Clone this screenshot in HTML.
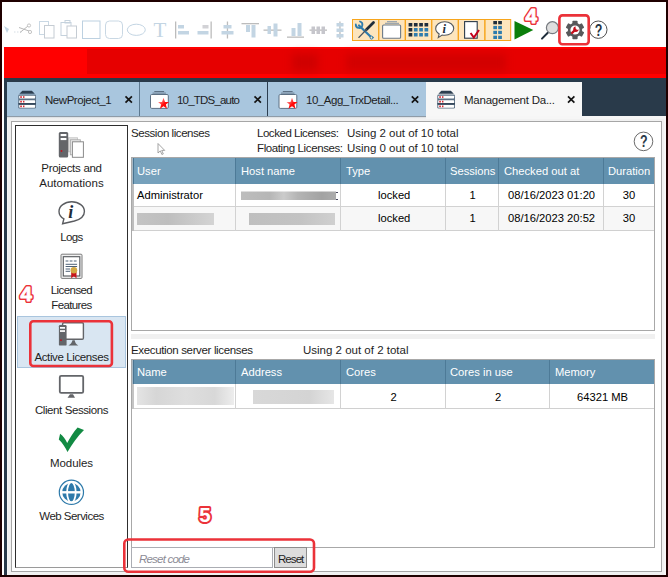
<!DOCTYPE html>
<html lang="en">
<head>
<meta charset="utf-8">
<title>Management Dashboard - Active Licenses</title>
<style>
html,body{margin:0;padding:0;background:#fff;}
body{width:668px;height:577px;position:relative;overflow:hidden;font-family:"Liberation Sans",sans-serif;font-size:12px;color:#1a1a1a;}
.a{position:absolute;box-sizing:border-box;}
.t{position:absolute;white-space:nowrap;line-height:16px;height:16px;font-size:11.5px;color:#1e1e1e;}
.g{font-size:11.2px;color:#000;}
.h{font-size:11.2px;color:#fff;}
.c{text-align:center;}
svg{position:absolute;overflow:visible;}
</style>
</head>
<body>
<!-- window frame -->
<div class="a" style="left:0;top:0;width:668px;height:577px;border:2px solid #1f0000;"></div>

<!-- red banner -->
<div class="a" style="left:4px;top:47px;width:662px;height:31px;background:#ff0000;"></div>
<div class="a" style="left:87px;top:49px;width:579px;height:25px;background:#e60000;"></div>

<!-- navy strip + tabs -->
<div class="a" style="left:4px;top:78px;width:662px;height:38px;background:#293a4a;"></div>
<div class="a" style="left:4px;top:116px;width:3px;height:459px;background:#293a4a;"></div>
<div class="a" style="left:7px;top:82px;width:419px;height:34px;background:#a9c6de;"></div>
<div class="a" style="left:139px;top:82px;width:1px;height:34px;background:#5d7990;"></div>
<div class="a" style="left:267px;top:82px;width:1px;height:34px;background:#2c3e50;"></div>
<div class="a" style="left:426px;top:82px;width:156px;height:35px;background:#f7f7f7;"></div>

<!-- content frame -->
<div class="a" style="left:7px;top:116px;width:659px;height:459px;background:#f6f6f6;"></div>
<div class="a" style="left:8px;top:119px;width:656px;height:456px;border:3px solid #f1f1f1;"></div>
<div class="a" style="left:7px;top:116px;width:419px;height:1px;background:#8f9ca8;"></div>
<div class="a" style="left:7px;top:117px;width:419px;height:2px;background:linear-gradient(#d9dcdf,#f6f6f6);"></div>
<div class="a" style="left:11px;top:121px;width:651px;height:451px;border:1px solid #a6a6a6;background:#fff;"></div>

<!-- sidebar -->
<div class="a" style="left:15px;top:125px;width:113px;height:443px;border:1px solid #2e2e2e;border-bottom-color:#9a9a9a;background:#fff;"></div>
<div class="a" style="left:17px;top:316px;width:109px;height:52px;background:#d9e6f2;border:1px solid #a9c5de;"></div>

<!-- red banner blurred redaction -->
<div class="a" style="left:292px;top:54px;width:26px;height:17px;background:#cf0000;filter:blur(4px);"></div>
<div class="a" style="left:346px;top:54px;width:160px;height:17px;background:#d20000;filter:blur(4px);"></div>

<!-- session licenses header text -->
<span class="t" style="left:131px;top:125px;letter-spacing:-0.44px;">Session licenses</span>
<span class="t" style="left:257px;top:125px;letter-spacing:-0.46px;">Locked Licenses:</span>
<span class="t" style="left:347px;top:125px;letter-spacing:-0.02px;">Using 2 out of 10 total</span>
<span class="t" style="left:257px;top:140px;letter-spacing:-0.39px;">Floating Licenses:</span>
<span class="t" style="left:347px;top:140px;letter-spacing:-0.02px;">Using 0 out of 10 total</span>

<!-- grid 1 -->
<div class="a" style="left:131px;top:157px;width:524px;height:174px;border:1px solid #a8a8a8;background:#fff;"></div>
<div class="a" style="left:132px;top:158px;width:522px;height:26px;background:#6291ae;"></div>
<div class="a" style="left:132px;top:158px;width:1px;height:26px;background:#a9b9c5;"></div><div class="a" style="left:133px;top:158px;width:1px;height:26px;background:#4a7591;"></div>
<div class="a" style="left:134px;top:158px;width:102px;height:26px;background:#76a1bc;"></div>
<div class="a" style="left:235px;top:158px;width:1px;height:26px;background:#4d7a97;"></div>
<div class="a" style="left:340px;top:158px;width:1px;height:26px;background:#4d7a97;"></div>
<div class="a" style="left:445px;top:158px;width:1px;height:26px;background:#4d7a97;"></div>
<div class="a" style="left:498px;top:158px;width:1px;height:26px;background:#4d7a97;"></div>
<div class="a" style="left:603px;top:158px;width:1px;height:26px;background:#4d7a97;"></div>
<span class="t h" style="left:137px;top:163px;">User</span>
<span class="t h" style="left:241px;top:163px;">Host name</span>
<span class="t h" style="left:346px;top:163px;">Type</span>
<span class="t h" style="left:450px;top:163px;">Sessions</span>
<span class="t h" style="left:504px;top:163px;">Checked out at</span>
<span class="t h" style="left:608px;top:163px;">Duration</span>
<!-- rows -->
<div class="a" style="left:132px;top:207px;width:522px;height:23px;background:#f7f7f7;"></div>
<div class="a" style="left:132px;top:206px;width:522px;height:1px;background:#d2d2d2;"></div>
<div class="a" style="left:132px;top:230px;width:522px;height:1px;background:#d0d0d0;"></div>
<div class="a" style="left:132px;top:184px;width:2px;height:47px;background:#bdbdbd;"></div>
<div class="a" style="left:235px;top:184px;width:1px;height:47px;background:#d2d2d2;"></div>
<div class="a" style="left:340px;top:184px;width:1px;height:47px;background:#d2d2d2;"></div>
<div class="a" style="left:445px;top:184px;width:1px;height:47px;background:#d2d2d2;"></div>
<div class="a" style="left:498px;top:184px;width:1px;height:47px;background:#d2d2d2;"></div>
<div class="a" style="left:603px;top:184px;width:1px;height:47px;background:#d2d2d2;"></div>
<span class="t g" style="left:137px;top:187px;">Administrator</span>
<span class="t g" style="left:378px;top:187px;">locked</span>
<span class="t g c" style="left:446px;top:187px;width:53px;">1</span>
<span class="t g" style="left:508px;top:187px;">08/16/2023 01:20</span>
<span class="t g c" style="left:604px;top:187px;width:50px;">30</span>
<span class="t g" style="left:378px;top:210px;">locked</span>
<span class="t g c" style="left:446px;top:210px;width:53px;">1</span>
<span class="t g" style="left:508px;top:210px;">08/16/2023 20:52</span>
<span class="t g c" style="left:604px;top:210px;width:50px;">30</span>
<!-- redaction bars -->
<div class="a" style="left:241px;top:191px;width:95px;height:9px;background:linear-gradient(90deg,#bdbdbd,#b6b6b6 30%,#cbcbcb 45%,#b4b4b4 60%,#a3a3a3 85%,#acacac);border-top:1px solid rgba(255,255,255,0.5);"></div>
<div class="a" style="left:336px;top:192px;width:2px;height:1px;background:#4a4a60;"></div><div class="a" style="left:336px;top:199px;width:2px;height:1px;background:#4a4a60;"></div>
<div class="a" style="left:137px;top:213px;width:77px;height:12px;background:linear-gradient(90deg,#c3c3c3,#bebebe 40%,#c9c9c9 70%,#d4d4d4);"></div>
<div class="a" style="left:249px;top:213px;width:86px;height:12px;background:linear-gradient(90deg,#bfbfbf,#c3c3c3 60%,#d0d0d0);"></div>

<!-- splitter -->
<div class="a" style="left:131px;top:334px;width:524px;height:5px;background:#f0f0f0;"></div>

<!-- execution server licenses -->
<span class="t" style="left:131px;top:342px;letter-spacing:-0.35px;">Execution server licenses</span>
<span class="t" style="left:303px;top:342px;letter-spacing:-0.00px;">Using 2 out of 2 total</span>

<!-- grid 2 -->
<div class="a" style="left:131px;top:359px;width:524px;height:189px;border:1px solid #a8a8a8;background:#fff;"></div>
<div class="a" style="left:132px;top:360px;width:522px;height:24px;background:#6291ae;"></div>
<div class="a" style="left:132px;top:360px;width:1px;height:24px;background:#a9b9c5;"></div><div class="a" style="left:133px;top:360px;width:1px;height:24px;background:#4a7591;"></div>
<div class="a" style="left:235px;top:360px;width:1px;height:24px;background:#4d7a97;"></div>
<div class="a" style="left:340px;top:360px;width:1px;height:24px;background:#4d7a97;"></div>
<div class="a" style="left:445px;top:360px;width:1px;height:24px;background:#4d7a97;"></div>
<div class="a" style="left:549px;top:360px;width:1px;height:24px;background:#4d7a97;"></div>
<span class="t h" style="left:137px;top:364px;">Name</span>
<span class="t h" style="left:241px;top:364px;">Address</span>
<span class="t h" style="left:346px;top:364px;">Cores</span>
<span class="t h" style="left:450px;top:364px;">Cores in use</span>
<span class="t h" style="left:555px;top:364px;">Memory</span>
<div class="a" style="left:132px;top:408px;width:522px;height:1px;background:#d0d0d0;"></div>
<div class="a" style="left:132px;top:384px;width:2px;height:25px;background:#c4c4c4;"></div>
<div class="a" style="left:235px;top:384px;width:1px;height:25px;background:#d2d2d2;"></div>
<div class="a" style="left:340px;top:384px;width:1px;height:25px;background:#d2d2d2;"></div>
<div class="a" style="left:445px;top:384px;width:1px;height:25px;background:#d2d2d2;"></div>
<div class="a" style="left:549px;top:384px;width:1px;height:25px;background:#d2d2d2;"></div>
<span class="t g c" style="left:341px;top:389px;width:105px;">2</span>
<span class="t g c" style="left:446px;top:389px;width:104px;">2</span>
<span class="t g" style="left:577px;top:389px;">64321 MB</span>
<div class="a" style="left:137px;top:387px;width:97px;height:18px;background:linear-gradient(90deg,#e4e4e4,#d6d6d6 20%,#dedede 50%,#d8d8d8 80%,#ededed);"></div>
<div class="a" style="left:253px;top:390px;width:81px;height:14px;background:linear-gradient(90deg,#d8d8d8,#d4d4d4 70%,#e6e6e6);"></div>

<!-- reset -->
<div class="a" style="left:131px;top:547px;width:142px;height:21px;border:1px solid #abadb3;background:#fff;"></div>
<span class="t" style="left:139px;top:551px;font-style:italic;color:#8c8c96;letter-spacing:-0.80px;">Reset code</span>
<div class="a" style="left:274px;top:547px;width:33px;height:21px;border:1px solid #8c8c8c;background:#dddddd;"></div>
<span class="t" style="left:278px;top:551px;letter-spacing:-0.94px;">Reset</span>

<!-- tab labels -->
<span class="t" style="left:45px;top:92px;letter-spacing:-0.46px;">NewProject_1</span>
<span class="t" style="left:177px;top:92px;letter-spacing:-0.80px;">10_TDS_auto</span>
<span class="t" style="left:306px;top:92px;letter-spacing:-0.47px;">10_Agg_TrxDetail...</span>
<span class="t" style="left:464px;top:92px;letter-spacing:-0.24px;">Management Da...</span>

<!-- sidebar labels -->
<span class="t c" style="left:16px;top:160px;width:111px;letter-spacing:-0.29px;">Projects and</span>
<span class="t c" style="left:16px;top:175px;width:111px;letter-spacing:0.07px;">Automations</span>
<span class="t c" style="left:16px;top:229px;width:111px;letter-spacing:-0.65px;">Logs</span>
<span class="t c" style="left:16px;top:282px;width:111px;letter-spacing:-0.58px;">Licensed</span>
<span class="t c" style="left:16px;top:297px;width:111px;letter-spacing:-0.63px;">Features</span>
<span class="t c" style="left:16px;top:349px;width:111px;letter-spacing:-0.39px;">Active Licenses</span>
<span class="t c" style="left:16px;top:402px;width:111px;letter-spacing:-0.41px;">Client Sessions</span>
<span class="t c" style="left:16px;top:455px;width:111px;letter-spacing:-0.08px;">Modules</span>
<span class="t c" style="left:16px;top:508px;width:111px;letter-spacing:-0.52px;">Web Services</span>

<!-- icons -->
<svg width="668" height="577" viewBox="0 0 668 577" style="left:0;top:0;">
 <defs><linearGradient id="sg" x1="0" y1="0" x2="1" y2="1"><stop offset="0.150" stop-color="#ff9a9a"/><stop offset="0.550" stop-color="#ff0a0a"/></linearGradient></defs>
 <!-- toolbar: disabled icons -->
 <g fill="none" stroke="#c9d8e4" stroke-width="1">
  <path d="M4 26 l3 7 l2 -4 z" fill="#c4d6e4" stroke="none"/>
  <path d="M14 32 h8" stroke="#d5dde4" stroke-dasharray="1.5 1.5"/>
  <path d="M19 27.5 L29 31 M20 32.5 L28 26" stroke="#b9b9b9"/>
  <circle cx="29" cy="25.5" r="1.6" stroke="#c4c4c4"/><circle cx="30" cy="32" r="1.6" stroke="#c4c4c4"/>
  <rect x="39.5" y="21.5" width="9" height="13" stroke="#c9d8e4"/>
  <rect x="44.500" y="25.5" width="9.5" height="12.500" fill="#fff" stroke="#c5ccd3"/>
  <rect x="61" y="22.500" width="10" height="13" stroke="#c5d2dd"/>
  <rect x="65" y="20.500" width="5" height="2.500" stroke="#c5d2dd"/>
  <rect x="67" y="26" width="9.500" height="12" fill="#fff" stroke="#c5ccd3"/>
  <rect x="82.500" y="21" width="17.500" height="17.500" stroke="#bdd1e1"/>
  <rect x="105.500" y="21" width="17" height="17.500" rx="4" stroke="#c9d8e4"/>
  <ellipse cx="136.300" cy="29.800" rx="9" ry="5.600" stroke="#c3d5e3"/>
 </g>
 <text x="153.500" y="37" font-family="Liberation Serif,serif" font-size="21" fill="#c3d5e3">T</text>
 <g fill="#c3d5e3" stroke="none">
  <rect x="175" y="21.500" width="1.300" height="17" fill="#bcbcbc"/><rect x="178" y="25" width="6" height="3.500"/><rect x="178" y="31" width="11" height="3.500"/>
  <rect x="210.500" y="21.500" width="1.300" height="17" fill="#bcbcbc"/><rect x="202.500" y="25" width="6" height="3.500" fill="#d2d2d6"/><rect x="197.500" y="31" width="11" height="3.500"/>
  <rect x="226.800" y="21.500" width="1.300" height="17" fill="#bcbcbc"/><rect x="223.500" y="25" width="8" height="3.500"/><rect x="221.500" y="31" width="12" height="3.500"/>
  <rect x="241.500" y="23" width="17.500" height="1.300" fill="#bcbcbc"/><rect x="246" y="25" width="4" height="7"/><rect x="251.500" y="25" width="4" height="12.500"/>
  <rect x="263.500" y="29.500" width="18" height="1.300" fill="#bcbcbc"/><rect x="267.500" y="26" width="3.500" height="8"/><rect x="273.500" y="23.500" width="4" height="13"/>
  <rect x="287" y="36.500" width="17" height="1.300" fill="#bcbcbc"/><rect x="291.500" y="28" width="4" height="8"/><rect x="297.500" y="23" width="4" height="13"/>
  <rect x="309.500" y="29.500" width="17.500" height="1.300" fill="#bcbcbc"/><rect x="311.500" y="26.500" width="3.500" height="7.500" fill="#c6c6cc"/><rect x="316.500" y="26.500" width="3.500" height="7.500" fill="#c6c6cc"/><rect x="321.500" y="26.500" width="3.500" height="7.500" fill="#c6c6cc"/>
  <rect x="339.300" y="21.500" width="1.300" height="17.500" fill="#bcbcbc"/><rect x="336.500" y="23" width="7" height="3.500"/><rect x="336.500" y="28.500" width="7" height="3.500"/><rect x="336.500" y="34" width="7" height="3.500"/>
 </g>
 <!-- toolbar: orange toggle group -->
 <g fill="#fde5bd" stroke="#f7a51c" stroke-width="1">
  <rect x="352.500" y="19.500" width="26" height="21"/>
  <rect x="378.900" y="19.500" width="26.200" height="21"/>
  <rect x="405.500" y="19.500" width="26" height="21"/>
  <rect x="431.900" y="19.500" width="26.200" height="21"/>
  <rect x="458.500" y="19.500" width="26.200" height="21"/>
  <rect x="485.100" y="19.500" width="25.600" height="21"/>
 </g>
 <!-- tools -->
 <g stroke-linecap="round" fill="none">
  <path d="M359 25.500 L371.500 37.500" stroke="#2e7cae" stroke-width="2.300"/>
  <path d="M355.800 24.500 a3.300 3.300 0 1 0 4.200 -3" stroke="#2e7cae" stroke-width="1.800"/>
  <circle cx="371.600" cy="37.600" r="1.500" fill="#fde5bd" stroke="#2e7cae" stroke-width="1"/>
  <path d="M373.500 22.500 L366.500 29.500" stroke="#1f2d3b" stroke-width="2.800"/>
  <path d="M366.500 29.500 L358.800 37.500" stroke="#4b5560" stroke-width="1.100"/>
 </g>
 <!-- window -->
 <path d="M387 21.700 h10 M385 23.400 h14" stroke="#9ea7ae" stroke-width="1.300" fill="none"/>
 <rect x="382.600" y="25" width="18" height="13.300" rx="1" fill="#fff" stroke="#6c7a88" stroke-width="1.100"/>
 <!-- 4x3 grid -->
 <g fill="#2e7cae">
  <rect x="408.600" y="23" width="3.700" height="3.500" fill="#1f2d3b"/><rect x="413.900" y="23" width="3.700" height="3.500" fill="#1f2d3b"/><rect x="419.200" y="23" width="3.700" height="3.500" fill="#1f2d3b"/><rect x="424.500" y="23" width="3.700" height="3.500" fill="#1f2d3b"/>
  <rect x="408.600" y="28" width="3.700" height="3.500" fill="#1f2d3b"/><rect x="413.900" y="28" width="3.700" height="3.500"/><rect x="419.200" y="28" width="3.700" height="3.500"/><rect x="424.500" y="28" width="3.700" height="3.500"/>
  <rect x="408.600" y="33" width="3.700" height="3.500" fill="#1f2d3b"/><rect x="413.900" y="33" width="3.700" height="3.500"/><rect x="419.200" y="33" width="3.700" height="3.500"/><rect x="424.500" y="33" width="3.700" height="3.500"/>
 </g>
 <!-- info bubble -->
 <path d="M444.700 21.800 c5.200 0 9 3 9 6.800 c0 3.800 -4 6.700 -9 6.700 c-0.900 0 -1.800 -0.100 -2.600 -0.300 l-3.800 2.600 l0.900 -3.700 c-2.200 -1.200 -3.500 -3.100 -3.500 -5.300 c0 -3.800 3.900 -6.800 9 -6.800 z" fill="#fff" stroke="#55595e" stroke-width="1.100"/>
 <text x="442.600" y="33" font-family="Liberation Serif,serif" font-size="12.500" font-style="italic" font-weight="bold" fill="#1f2d3b">i</text>
 <!-- page with check -->
 <rect x="464.600" y="21.600" width="12.600" height="16.600" fill="#fff" stroke="#2c3b4b" stroke-width="1.100"/>
 <path d="M470.600 33 L473.800 37.600 L479 30" fill="none" stroke="#c4001a" stroke-width="2"/>
 <!-- 2x4 grid -->
 <g fill="#2e7cae">
  <rect x="493.300" y="21" width="3.700" height="3.300" fill="#1f2d3b"/><rect x="498.200" y="21" width="3.700" height="3.300" fill="#1f2d3b"/>
  <rect x="493.300" y="25.900" width="3.700" height="3.300"/><rect x="498.200" y="25.900" width="3.700" height="3.300"/>
  <rect x="493.300" y="30.800" width="3.700" height="3.300"/><rect x="498.200" y="30.800" width="3.700" height="3.300"/>
  <rect x="493.300" y="35.700" width="3.700" height="3.300"/><rect x="498.200" y="35.700" width="3.700" height="3.300"/>
 </g>
 <!-- play -->
 <path d="M514.500 21 L533.300 30.100 L514.500 39.400 z" fill="#0b7f0b"/>
 <!-- magnifier -->
 <path d="M547.800 32.700 L542 38.600" stroke="#1f2d3b" stroke-width="2" stroke-linecap="round"/>
 <circle cx="552.400" cy="27.700" r="6" fill="#dedede" stroke="#777b80" stroke-width="1.200"/>
 <!-- gear -->
 <g transform="translate(575 30)">
  <g fill="#58595b">
   <rect x="-2.600" y="-9.300" width="5.200" height="18.600" rx="0.800"/>
   <rect x="-2.600" y="-9.300" width="5.200" height="18.600" rx="0.800" transform="rotate(60)"/>
   <rect x="-2.600" y="-9.300" width="5.200" height="18.600" rx="0.800" transform="rotate(120)"/>
   <circle r="7.200"/>
  </g>
  <circle r="4.600" fill="#fff"/>
  <path d="M-2.900 2.900 L0.400 -0.400" stroke="#c4101c" stroke-width="2.200" stroke-linecap="round"/>
  <path d="M0.800 -3.600 a2.800 2.800 0 1 0 3 3.200 l-2.100 0.300 l-1.300 -1.500 z" fill="#c4101c"/>
 </g>
 <!-- help (toolbar) -->
 <circle cx="598.300" cy="29.700" r="8.700" fill="#fff" stroke="#3c3c3c" stroke-width="0.900"/>
 <text transform="translate(598.600 35.600) scale(0.780 1)" text-anchor="middle" font-family="Liberation Sans,sans-serif" font-size="16" font-weight="bold" fill="#263545">?</text>
 <!-- help (content) -->
 <circle cx="643.500" cy="141.400" r="9.300" fill="#fff" stroke="#5a5a5a" stroke-width="0.900"/>
 <text transform="translate(643.900 147.300) scale(0.780 1)" text-anchor="middle" font-family="Liberation Sans,sans-serif" font-size="16" font-weight="bold" fill="#2b3a4a">?</text>

 <!-- tab icons: server stacks -->
 <g id="srv1">
  <path d="M22.400 90.800 h9.400 l3 3 h-15.400 z" fill="#2c3e50"/>
  <rect x="18.300" y="94.600" width="17.700" height="14" rx="1.300" fill="#5c7084"/>
  <rect x="19.200" y="95.700" width="15.900" height="2.700" rx="0.600" fill="#fff"/>
  <rect x="19.200" y="100.300" width="15.900" height="2.700" rx="0.600" fill="#fff"/>
  <rect x="19.200" y="105" width="15.900" height="2.700" rx="0.600" fill="#fff"/>
  <rect x="18.300" y="103.200" width="17.700" height="1.300" fill="#2f4154"/>
  <g fill="#d4141e"><rect x="20.300" y="96.200" width="1.500" height="1.700"/><rect x="23.100" y="96.200" width="1.300" height="1.700"/><rect x="20.300" y="100.800" width="1.500" height="1.700"/><rect x="23.100" y="100.800" width="1.300" height="1.700"/><rect x="20.300" y="105.500" width="1.500" height="1.700"/><rect x="23.100" y="105.500" width="1.300" height="1.700"/></g>
 </g>
 <g transform="translate(419 0)">
  <path d="M22.400 90.800 h9.400 l3 3 h-15.400 z" fill="#2c3e50"/>
  <rect x="18.300" y="94.600" width="17.700" height="14" rx="1.300" fill="#5c7084"/>
  <rect x="19.200" y="95.700" width="15.900" height="2.700" rx="0.600" fill="#fff"/>
  <rect x="19.200" y="100.300" width="15.900" height="2.700" rx="0.600" fill="#fff"/>
  <rect x="19.200" y="105" width="15.900" height="2.700" rx="0.600" fill="#fff"/>
  <rect x="18.300" y="103.200" width="17.700" height="1.300" fill="#2f4154"/>
  <g fill="#d4141e"><rect x="20.300" y="96.200" width="1.500" height="1.700"/><rect x="23.100" y="96.200" width="1.300" height="1.700"/><rect x="20.300" y="100.800" width="1.500" height="1.700"/><rect x="23.100" y="100.800" width="1.300" height="1.700"/><rect x="20.300" y="105.500" width="1.500" height="1.700"/><rect x="23.100" y="105.500" width="1.300" height="1.700"/></g>
 </g>
 <!-- tab icons: starred windows -->
 <g>
  <rect x="154.300" y="91" width="9.800" height="1.100" fill="#5c7084"/>
  <rect x="152.500" y="92.400" width="13.400" height="1.800" fill="#8399ad"/>
  <rect x="150.500" y="94.500" width="17.800" height="13.900" rx="1.200" fill="#fff" stroke="#5c7084" stroke-width="1"/>
  <path d="M163.500 97.800 L165 101.900 L169 102 L165.900 104.600 L167 108.800 L163.500 106.300 L160 108.800 L161.100 104.600 L158 102 L162 101.900 z" fill="url(#sg)"/>
 </g>
 <g transform="translate(128.500 0)">
  <rect x="154.300" y="91" width="9.800" height="1.100" fill="#5c7084"/>
  <rect x="152.500" y="92.400" width="13.400" height="1.800" fill="#8399ad"/>
  <rect x="150.500" y="94.500" width="17.800" height="13.900" rx="1.200" fill="#fff" stroke="#5c7084" stroke-width="1"/>
  <path d="M163.500 97.800 L165 101.900 L169 102 L165.900 104.600 L167 108.800 L163.500 106.300 L160 108.800 L161.100 104.600 L158 102 L162 101.900 z" fill="url(#sg)"/>
 </g>
 <!-- tab close marks -->
 <g stroke="#141414" stroke-width="1.700" fill="none">
  <path d="M125.500 96.300 l6.400 6.400 m0 -6.400 l-6.400 6.400"/>
  <path d="M254.500 96.300 l6.400 6.400 m0 -6.400 l-6.400 6.400"/>
  <path d="M411.800 96.300 l6.400 6.400 m0 -6.400 l-6.400 6.400"/>
  <path d="M568 96.300 l6.400 6.400 m0 -6.400 l-6.400 6.400"/>
 </g>

 <!-- sidebar: projects & automations -->
 <g>
  <rect x="68.500" y="137.800" width="9" height="14" fill="#e6e6e6" stroke="#c4c4c4" stroke-width="0.900"/>
  <rect x="70.300" y="139.800" width="10" height="15" fill="#ececec" stroke="#a8a8a8" stroke-width="0.900"/>
  <rect x="72.400" y="141.800" width="11" height="15.500" fill="#fff" stroke="#8a8a8a" stroke-width="1"/>
  <rect x="58.800" y="132" width="9.400" height="25.500" rx="1.500" fill="#636569"/>
  <rect x="60.600" y="134" width="5.800" height="2.100" fill="#fff"/><rect x="60.600" y="138" width="5.800" height="2.100" fill="#fff"/>
  <circle cx="61.500" cy="151" r="0.900" fill="#c4101c"/>
 </g>
 <!-- sidebar: logs -->
 <path d="M71.700 201.800 c7.200 0 12.700 4.300 12.700 9.600 c0 4.500 -4.300 8 -10 9.600 l-11.800 2.800 l1.300 -5 c-3 -1.700 -4.900 -4.400 -4.900 -7.400 c0 -5.300 5.600 -9.600 12.700 -9.600 z" fill="#fff" stroke="#5a5c60" stroke-width="1.400"/>
 <text x="68.300" y="218" font-family="Liberation Serif,serif" font-size="18" font-style="italic" font-weight="bold" fill="#1f2d3b">i</text>
 <!-- sidebar: licensed features -->
 <g>
  <rect x="61" y="254.200" width="21" height="24.200" rx="1" fill="#f1f1f1" stroke="#7b7b7b" stroke-width="1"/>
  <rect x="63.300" y="256.700" width="16.500" height="19.300" fill="#fff" stroke="#55585c" stroke-width="1.100"/>
  <path d="M65.600 261 h11.500" stroke="#4e6278" stroke-width="1.200" stroke-dasharray="2.800 1.300"/>
  <path d="M65.600 264.300 h11.500 M65.600 266.500 h11.500 M65.600 269 h4.500 M65.600 271.300 h4.500" stroke="#4e6278" stroke-width="1"/>
  <path d="M71.200 272 h5.300 v6.300 l-2.650 -2 l-2.650 2 z" fill="#c8141c"/>
  <circle cx="73.900" cy="270.200" r="3.300" fill="#d3a945"/>
 </g>
 <!-- sidebar: active licenses -->
 <g>
  <rect x="62.600" y="322.800" width="20.800" height="16.400" rx="1.200" fill="#fff" stroke="#636569" stroke-width="1.400"/>
  <path d="M72.500 340.300 h2.200 c0.500 2.500 1.500 4.100 3.600 5.300 h-9.900 c2.100 -1.200 3.400 -2.800 4.100 -5.300 z" fill="#636569"/>
  <rect x="58.900" y="325" width="7.700" height="20.600" rx="1.200" fill="#636569"/>
  <rect x="60" y="327" width="5" height="1.700" fill="#fff"/><rect x="60" y="330.200" width="5" height="1.700" fill="#fff"/>
  <circle cx="61" cy="340.200" r="0.900" fill="#c4101c"/>
 </g>
 <!-- sidebar: client sessions -->
 <g>
  <rect x="59.800" y="375.900" width="23.400" height="16.900" rx="1.400" fill="#fff" stroke="#636569" stroke-width="1.800"/>
  <path d="M70 394.200 h3 l2 3.600 h-7.500 z" fill="#636569"/>
 </g>
 <!-- sidebar: modules -->
 <path d="M60.100 433.800 C63 436 65.500 439.500 67.200 442.900 C70 437.500 73.500 432 77.600 427.400 L84 430.100 C77.500 436.500 72 444.500 67.500 452 C65.500 447.500 62.500 443 58.800 439.500 z" fill="#128a43"/>
 <!-- sidebar: web services -->
 <g>
  <circle cx="71.400" cy="492.300" r="12.100" fill="#fff" stroke="#2e7aaa" stroke-width="1.200"/>
  <circle cx="71.400" cy="492.300" r="9.200" fill="#2e7aaa"/>
  <path d="M61 492.300 h21" stroke="#fff" stroke-width="2.400"/>
  <ellipse cx="71.400" cy="492.300" rx="4.300" ry="10.200" fill="none" stroke="#fff" stroke-width="1.800"/>
 </g>

 <!-- mouse cursor -->
 <path d="M158 143.500 v9.500 l2.300 -2.100 l1.600 3.600 l1.400 -0.600 l-1.600 -3.500 h3 z" fill="#fff" stroke="#8d8d8d" stroke-width="0.800"/>

 <!-- annotations -->
 <g fill="none" stroke="#eb3239" stroke-width="2.600">
  <rect x="559.400" y="15.400" width="29.300" height="28.800" rx="3"/>
  <rect x="30.300" y="321.200" width="81.600" height="44.800" rx="3"/>
  <rect x="124.300" y="539.500" width="189.700" height="32.300" rx="4"/>
 </g>
 <g font-family="Liberation Sans,sans-serif" font-weight="bold" font-size="20.500" stroke-linejoin="round">
  <g fill="#eb3239" stroke="#eb3239" stroke-width="3.900">
   <text x="525.400" y="22.500">4</text>
   <text x="20.400" y="300.500">4</text>
   <text x="199.300" y="521.900">5</text>
  </g>
  <g fill="#fff" stroke="#fff" stroke-width="0.900">
   <text x="525.400" y="22.500">4</text>
   <text x="20.400" y="300.500">4</text>
   <text x="199.300" y="521.900" stroke-width="0.100">5</text>
  </g>
 </g>
</svg>

</body>
</html>
